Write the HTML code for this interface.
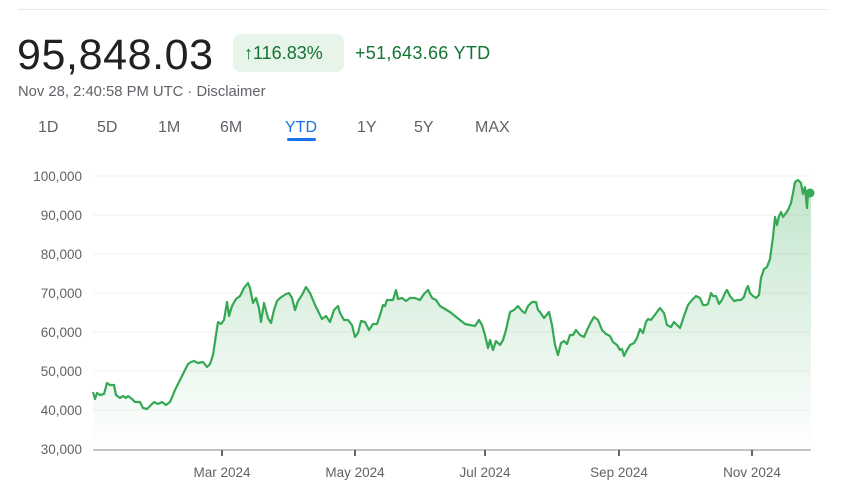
<!DOCTYPE html>
<html><head><meta charset="utf-8"><style>
body{margin:0;width:850px;height:500px;background:#fff;font-family:"Liberation Sans",sans-serif;position:relative;overflow:hidden}
.a{position:absolute;white-space:nowrap}
</style></head><body>
<div class="a" style="left:18px;top:9px;width:810px;height:1px;background:#e8e8e8"></div>
<div class="a" style="left:17px;top:31px;font-size:43px;color:#202124;letter-spacing:0.6px">95,848.03</div>
<div class="a" style="left:233px;top:34px;width:111px;height:38px;background:#e6f4ea;border-radius:8px"></div>
<div class="a" style="left:244px;top:43px;font-size:18px;color:#137333">↑116.83%</div>
<div class="a" style="left:355px;top:43px;font-size:18px;color:#137333;letter-spacing:0.3px">+51,643.66 YTD</div>
<div class="a" style="left:18px;top:84px;font-size:14.8px;color:#5f6368">Nov 28, 2:40:58 PM UTC · Disclaimer</div>
<div class="a" style="top:119px;left:0;font-size:16px;color:#5f6368">
<span class="a" style="left:38px">1D</span><span class="a" style="left:97px">5D</span><span class="a" style="left:158px">1M</span><span class="a" style="left:220px">6M</span><span class="a" style="left:285px;color:#1a73e8">YTD</span><span class="a" style="left:357px">1Y</span><span class="a" style="left:414px">5Y</span><span class="a" style="left:475px">MAX</span></div>
<div class="a" style="left:287px;top:138px;width:29px;height:3px;background:#1a73e8;border-radius:2px"></div>
<svg class="a" style="left:0;top:0" width="850" height="500">
<defs><linearGradient id="g" x1="0" y1="0" x2="0" y2="1"><stop offset="0" stop-color="#34a853" stop-opacity="0.3"/><stop offset="1" stop-color="#34a853" stop-opacity="0"/></linearGradient></defs>
<g stroke="#efefef" stroke-width="1">
<line x1="93" y1="176" x2="810" y2="176"/><line x1="93" y1="215" x2="810" y2="215"/><line x1="93" y1="254" x2="810" y2="254"/><line x1="93" y1="293" x2="810" y2="293"/><line x1="93" y1="332" x2="810" y2="332"/><line x1="93" y1="371" x2="810" y2="371"/><line x1="93" y1="410" x2="810" y2="410"/></g>
<line x1="93" y1="450" x2="811" y2="450" stroke="#b0b0b0" stroke-width="1.5"/>
<g stroke="#666" stroke-width="2"><line x1="222" y1="450" x2="222" y2="456"/><line x1="355" y1="450" x2="355" y2="456"/><line x1="485" y1="450" x2="485" y2="456"/><line x1="619" y1="450" x2="619" y2="456"/><line x1="752" y1="450" x2="752" y2="456"/></g>
<g font-size="13.5" fill="#5f6368" font-family="Liberation Sans,sans-serif" text-anchor="end">
<text x="82" y="181">100,000</text><text x="82" y="220">90,000</text><text x="82" y="259">80,000</text><text x="82" y="298">70,000</text><text x="82" y="337">60,000</text><text x="82" y="376">50,000</text><text x="82" y="415">40,000</text><text x="82" y="454">30,000</text></g>
<g font-size="13.5" fill="#5f6368" font-family="Liberation Sans,sans-serif" text-anchor="middle">
<text x="222" y="477">Mar 2024</text><text x="355" y="477">May 2024</text><text x="485" y="477">Jul 2024</text><text x="619" y="477">Sep 2024</text><text x="752" y="477">Nov 2024</text></g>
<path d="M93,392 95,399 97,393 100,395 104,394 107,383 110,385 114,385 116,395 120,398 123,396 126,398 128,396 132,399 135,402 140,402 143,408 147,409 151,405 154,402 158,404 162,402 166,405 170,402 175,390 180,380 184,372 188,364 191,362 194,361 198,363 203,362 207,367 210,364 213,355 216,335 218,322 221,324 224,320 227,302 229,316 232,306 236,299 240,296 244,288 248,283 250,288 253,303 256,298 259,308 261,322 264,303 268,318 271,323 274,310 277,301 280,298 283,296 286,294 289,293 292,298 295,310 298,301 302,295 306,287 310,293 313,300 316,307 319,313 322,319 326,316 330,322 334,310 338,306 340,313 344,320 348,320 352,325 355,337 358,333 361,321 365,322 369,330 373,324 377,324 380,315 383,305 385,306 387,300 390,300 393,300 396,290 398,299 402,298 406,301 410,298 415,298 420,300 424,294 428,290 432,298 436,300 440,306 445,309 450,312 455,316 460,320 465,324 470,325 475,326 479,320 482,325 485,335 488,348 490,340 493,350 496,341 500,345 503,340 506,330 510,312 514,310 518,306 522,311 525,313 528,306 532,302 536,302 538,310 540,312 544,318 549,312 552,325 555,345 558,355 561,343 564,341 567,344 570,335 573,335 576,330 580,335 584,337 588,328 591,322 594,317 598,320 602,330 606,334 610,336 613,342 617,345 620,350 622,349 624,356 627,350 630,345 634,343 637,338 640,329 643,333 646,322 648,319 651,320 654,316 657,312 660,308 664,313 667,325 671,327 674,322 677,325 680,328 684,316 688,305 692,300 696,296 700,298 703,305 706,305 708,304 711,293 713,296 716,296 719,304 722,300 725,293 727,290 730,296 734,301 738,300 741,300 744,297 746,290 748,286 750,293 753,296 756,298 759,295 761,278 764,269 767,267 770,259 773,237 775,217 777,225 779,216 781,212 783,217 786,213 788,210 791,203 793,193 795,182 798,180 801,183 803,194 805,187 807,208 808,193 811,193 L811,449 L93,449 Z" fill="url(#g)" stroke="none"/>
<path d="M93,392 95,399 97,393 100,395 104,394 107,383 110,385 114,385 116,395 120,398 123,396 126,398 128,396 132,399 135,402 140,402 143,408 147,409 151,405 154,402 158,404 162,402 166,405 170,402 175,390 180,380 184,372 188,364 191,362 194,361 198,363 203,362 207,367 210,364 213,355 216,335 218,322 221,324 224,320 227,302 229,316 232,306 236,299 240,296 244,288 248,283 250,288 253,303 256,298 259,308 261,322 264,303 268,318 271,323 274,310 277,301 280,298 283,296 286,294 289,293 292,298 295,310 298,301 302,295 306,287 310,293 313,300 316,307 319,313 322,319 326,316 330,322 334,310 338,306 340,313 344,320 348,320 352,325 355,337 358,333 361,321 365,322 369,330 373,324 377,324 380,315 383,305 385,306 387,300 390,300 393,300 396,290 398,299 402,298 406,301 410,298 415,298 420,300 424,294 428,290 432,298 436,300 440,306 445,309 450,312 455,316 460,320 465,324 470,325 475,326 479,320 482,325 485,335 488,348 490,340 493,350 496,341 500,345 503,340 506,330 510,312 514,310 518,306 522,311 525,313 528,306 532,302 536,302 538,310 540,312 544,318 549,312 552,325 555,345 558,355 561,343 564,341 567,344 570,335 573,335 576,330 580,335 584,337 588,328 591,322 594,317 598,320 602,330 606,334 610,336 613,342 617,345 620,350 622,349 624,356 627,350 630,345 634,343 637,338 640,329 643,333 646,322 648,319 651,320 654,316 657,312 660,308 664,313 667,325 671,327 674,322 677,325 680,328 684,316 688,305 692,300 696,296 700,298 703,305 706,305 708,304 711,293 713,296 716,296 719,304 722,300 725,293 727,290 730,296 734,301 738,300 741,300 744,297 746,290 748,286 750,293 753,296 756,298 759,295 761,278 764,269 767,267 770,259 773,237 775,217 777,225 779,216 781,212 783,217 786,213 788,210 791,203 793,193 795,182 798,180 801,183 803,194 805,187 807,208 808,193 811,193" fill="none" stroke="#34a853" stroke-width="2.2" stroke-linejoin="round"/>
<circle cx="810" cy="193" r="4.5" fill="#34a853"/>
</svg>
</body></html>
